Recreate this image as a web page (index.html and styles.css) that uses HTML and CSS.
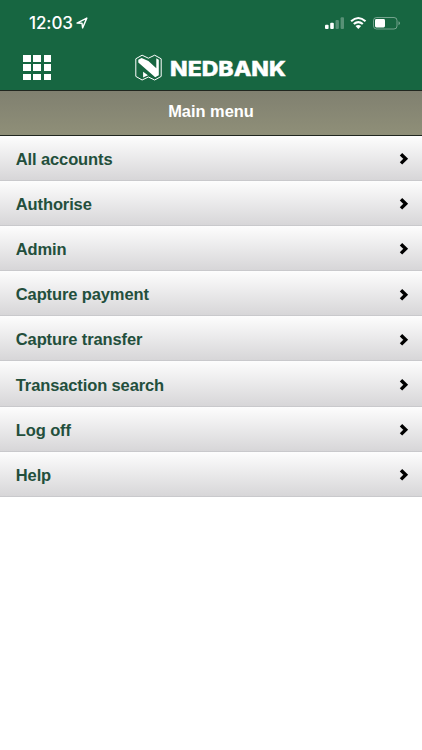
FILE: index.html
```html
<!DOCTYPE html>
<html lang="en">
<head>
<meta charset="utf-8">
<title>Nedbank</title>
<link rel="stylesheet" href="styles.css">
</head>
<body>
<header class="header">
  <div class="status">
    <div class="clock"><span class="time">12:03</span>
      <svg class="location" viewBox="0 0 12 12"><path d="M1 6.1 10.8 1.1 6.6 10.9 6 6.2Z" fill="none" stroke="#fff" stroke-width="1.4" stroke-linejoin="round"/></svg>
    </div>
    <svg class="indicators" viewBox="0 0 76 16">
      <g fill="#fff"><rect x="0" y="9.7" width="3.6" height="4.3" rx="1"/><rect x="5.2" y="7.8" width="3.6" height="6.2" rx="1"/></g>
      <g fill="#fff" opacity=".28"><rect x="10.5" y="5" width="3.4" height="9" rx="1"/><rect x="15.6" y="2.3" width="3.4" height="11.7" rx="1"/></g>
      <g fill="none" stroke="#fff" stroke-width="2.1"><path d="M26.1 6.3Q33.3-.3 40.5 6.3M28.8 9Q33.3 5.1 37.8 9"/></g>
      <path d="M30.5 11Q33.3 8.9 36.1 11L33.3 14Z" fill="#fff"/>
      <rect x="48.5" y="2.5" width="23.5" height="11.5" rx="3" fill="none" stroke="#fff" stroke-opacity=".4"/>
      <rect x="50" y="4" width="10" height="8.5" rx="1.4" fill="#fff"/>
      <path d="M73.5 6.3Q75 7 75 8.2T73.5 10.2Z" fill="#fff" opacity=".4"/>
    </svg>
  </div>
  <div class="brandbar">
    <div class="grid"><i></i><i></i><i></i><i></i><i></i><i></i><i></i><i></i><i></i></div>
    <div class="brand">
      <svg class="mark" viewBox="0 0 27 27">
        <path d="M.8 4.8 7.1 1.2 13.4 4.2 19.7 1.2 26.2 4.8V22.4L19.7 26 13.4 23 7.1 26 .8 22.4Z" fill="none" stroke="#fff" stroke-width="1"/>
        <path d="M3.3 5.8 6.6 3.9 13.4 6.9 21.3 14.2V4.2L23.8 5.7V21.2L20.2 23.2 3.3 8.5ZM8.1 17.7 13 21.2 8.1 23.4Z" fill="#fff"/>
      </svg>
      <svg class="wordmark" viewBox="0 0 118 20"><text x="0" y="16" textLength="116" lengthAdjust="spacingAndGlyphs">NEDBANK</text></svg>
    </div>
  </div>
</header>
<h1 class="title">Main menu</h1>
<nav class="menu">
  <a class="item">All accounts<svg class="chevron" viewBox="0 0 10 14"><path d="M2 2.2 6.7 6.8 2 11.4"/></svg></a>
  <a class="item">Authorise<svg class="chevron" viewBox="0 0 10 14"><path d="M2 2.2 6.7 6.8 2 11.4"/></svg></a>
  <a class="item">Admin<svg class="chevron" viewBox="0 0 10 14"><path d="M2 2.2 6.7 6.8 2 11.4"/></svg></a>
  <a class="item">Capture payment<svg class="chevron" viewBox="0 0 10 14"><path d="M2 2.2 6.7 6.8 2 11.4"/></svg></a>
  <a class="item">Capture transfer<svg class="chevron" viewBox="0 0 10 14"><path d="M2 2.2 6.7 6.8 2 11.4"/></svg></a>
  <a class="item">Transaction search<svg class="chevron" viewBox="0 0 10 14"><path d="M2 2.2 6.7 6.8 2 11.4"/></svg></a>
  <a class="item">Log off<svg class="chevron" viewBox="0 0 10 14"><path d="M2 2.2 6.7 6.8 2 11.4"/></svg></a>
  <a class="item">Help<svg class="chevron" viewBox="0 0 10 14"><path d="M2 2.2 6.7 6.8 2 11.4"/></svg></a>
</nav>
</body>
</html>
```
FILE: styles.css
```css
* { box-sizing: border-box; }
body { margin: 0; background: #fff; font-family: "Liberation Sans", Arial, sans-serif; }
.header { height: 90px; background: #176641; color: #fff; }
.status { height: 46px; padding: 13px 21px 0 29px; display: flex; justify-content: space-between; }
.clock { display: flex; height: 20px; line-height: 20px; font: 500 17px/20px Inter, sans-serif; }
.time { width: 47px; letter-spacing: -0.1px; }
.location { width: 12px; height: 12px; margin-top: 4px; }
.indicators { width: 76px; height: 16px; margin-top: 2px; }
.brandbar { height: 44px; display: flex; align-items: flex-start; padding-left: 23px; }
.grid { display: grid; grid-template-columns: repeat(3, 7.5px); grid-auto-rows: 6.6px; column-gap: 2.8px; row-gap: 2.8px; margin-top: 9px; width: 28px; }
.grid i { background: #fff; }
.brand { display: flex; margin-left: 84px; margin-top: 8px; }
.mark { width: 27px; height: 27px; }
.wordmark { width: 118px; height: 20px; margin: 6px 0 0 7.5px; overflow: visible; }
.wordmark text { font: 800 20px Inter, sans-serif; fill: #fff; stroke: #fff; stroke-width: .4px; }
.title { margin: 0; height: 45.5px; border-top: 1px solid #20261f; border-bottom: 1.5px solid #20261f; background: linear-gradient(#808070, #8f8f78); color: #fff; font-size: 16.4px; line-height: 41px; text-align: center; }
.menu { display: flex; flex-direction: column; }
.item { height: 45.2px; padding: 3px 13.5px 0 15.8px; display: flex; align-items: center; justify-content: space-between; color: #234f3c; font-size: 16.5px; letter-spacing: -.12px; font-weight: bold; border-bottom: 1px solid #c9c9cc; background: linear-gradient(#fdfdfd, #d7d6d8); }
.chevron { width: 10px; height: 14px; }
.chevron path { fill: none; stroke: #000; stroke-width: 3.4; }
```
